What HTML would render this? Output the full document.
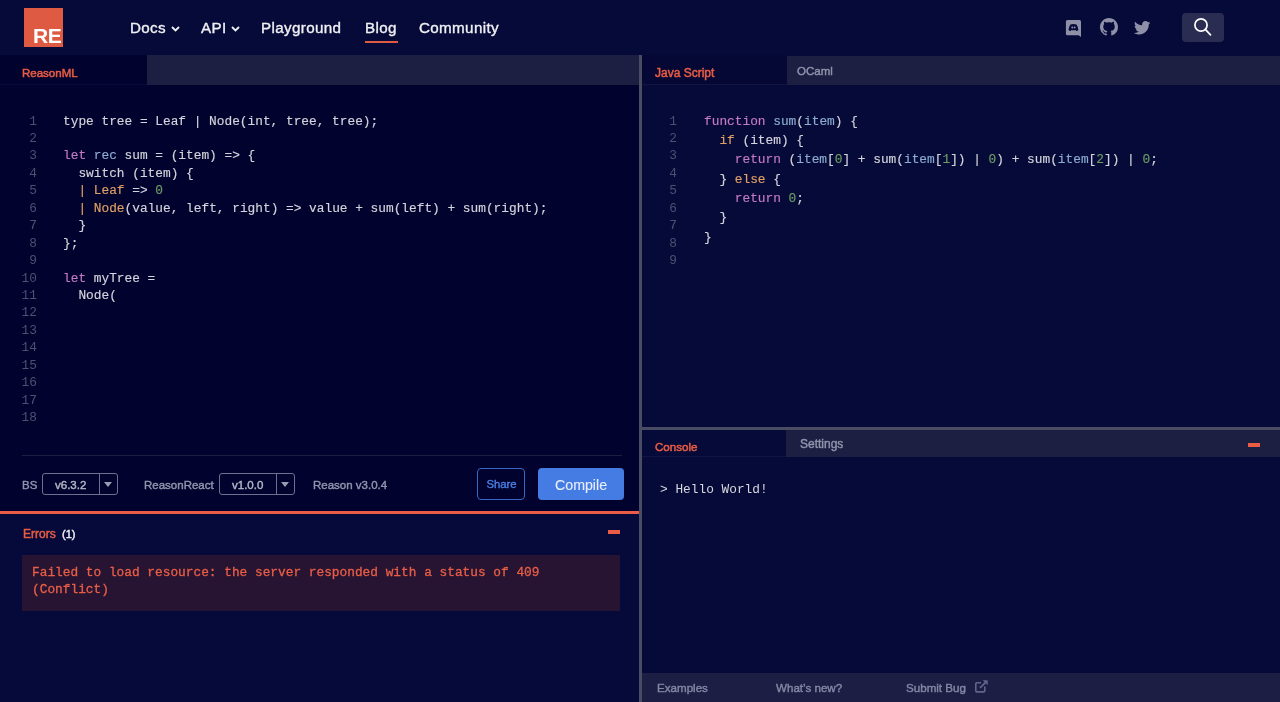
<!DOCTYPE html>
<html><head><meta charset="utf-8">
<style>
*{margin:0;padding:0;box-sizing:border-box}
html,body{width:1280px;height:702px;overflow:hidden;background:#02022e;font-family:"Liberation Sans",sans-serif}
.a{position:absolute}
.mono{font-family:"Liberation Mono",monospace}
#nav{left:0;top:0;width:1280px;height:55px;background:#060a38}
.nl{position:absolute;top:18.6px;-webkit-text-stroke-width:0.35px;color:#f0f0f4;font-size:15.2px;letter-spacing:.35px;line-height:18px;white-space:nowrap}
.chev{position:absolute;top:26px;width:9px;height:6px}
.tabbar{height:30px}
.lbl{position:absolute;white-space:nowrap;line-height:14px;-webkit-text-stroke-width:0.42px}
.ln{position:absolute;color:#4e5070;text-align:right;font-family:"Liberation Mono",monospace;font-size:12.82px;line-height:17.43px;white-space:pre}
.code{position:absolute;color:#d4d4dc;-webkit-text-stroke-width:0.15px;font-family:"Liberation Mono",monospace;font-size:12.82px;white-space:pre}
.k{color:#c47ac0}.b{color:#8cacd0}.o{color:#e0a065}.g{color:#6c9c64}
</style></head><body>
<div id="root" style="position:absolute;left:0;top:0;width:1280px;height:702px;overflow:hidden;will-change:transform">
<!-- NAV -->
<div id="nav" class="a">
  <div class="a" style="left:24px;top:8px;width:39px;height:39px;background:#df5a42"></div>
  <div class="a" style="left:33px;top:25px;color:#fff;font-weight:bold;font-size:21px;line-height:21px;letter-spacing:-0.5px">RE</div>
  <div class="nl" style="left:130px">Docs</div>
  <svg class="chev" style="left:171px" viewBox="0 0 9 6"><path d="M1 1 L4.5 4.5 L8 1" stroke="#f0f0f4" stroke-width="1.8" fill="none"/></svg>
  <div class="nl" style="left:201px">API</div>
  <svg class="chev" style="left:231px" viewBox="0 0 9 6"><path d="M1 1 L4.5 4.5 L8 1" stroke="#f0f0f4" stroke-width="1.8" fill="none"/></svg>
  <div class="nl" style="left:261px">Playground</div>
  <div class="nl" style="left:365px">Blog</div>
  <div class="a" style="left:365px;top:41px;width:33px;height:2px;background:#df5a42"></div>
  <div class="nl" style="left:419px">Community</div>
  <!-- icons -->
  <svg class="a" style="left:1065px;top:19px" width="18" height="19" viewBox="0 0 18 19">
    <path d="M2.4 1.1 H14.5 A1.5 1.5 0 0 1 16 2.6 V17.9 L13.6 16.3 H2.4 A1.5 1.5 0 0 1 0.9 14.8 V2.6 A1.5 1.5 0 0 1 2.4 1.1 Z" fill="#8e90a8"/>
    <path d="M5.4 5.4 Q8.45 4.5 11.5 5.4 Q13.4 8.3 13.4 11.1 Q12.4 12 11.2 12 L10.5 11 Q8.45 11.6 6.4 11 L5.7 12 Q4.5 12 3.5 11.1 Q3.5 8.3 5.4 5.4 Z" fill="#060a38"/>
    <circle cx="7.3" cy="8.45" r="0.95" fill="#8e90a8"/><circle cx="9.6" cy="8.45" r="0.95" fill="#8e90a8"/>
  </svg>
  <svg class="a" style="left:1099.6px;top:18px" width="18" height="18" viewBox="0 0 16 16">
    <path fill="#8e90a8" d="M8 0C3.58 0 0 3.58 0 8c0 3.54 2.29 6.53 5.47 7.59.4.07.55-.17.55-.38 0-.19-.01-.82-.01-1.49-2.01.37-2.53-.49-2.69-.94-.09-.23-.48-.94-.82-1.13-.28-.15-.68-.52-.01-.53.63-.01 1.08.58 1.23.82.72 1.21 1.87.87 2.33.66.07-.52.28-.87.51-1.07-1.78-.2-3.640-.89-3.64-3.95 0-.87.31-1.59.82-2.15-.08-.2-.36-1.02.08-2.12 0 0 .67-.21 2.2.82.64-.18 1.32-.27 2-.27.68 0 1.36.09 2 .27 1.53-1.04 2.2-.82 2.2-.82.44 1.1.16 1.92.08 2.12.51.56.82 1.270.82 2.15 0 3.07-1.87 3.75-3.65 3.95.29.25.54.73.54 1.48 0 1.07-.01 1.93-.01 2.2 0 .21.15.46.55.38A8.013 8.013 0 0016 8c0-4.42-3.58-8-8-8z"/>
  </svg>
  <svg class="a" style="left:1133.8px;top:20.8px" width="16.5" height="13.8" viewBox="0 0 24 20">
    <path fill="#8e90a8" d="M24 2.4c-.9.4-1.8.6-2.8.8 1-.6 1.8-1.6 2.2-2.7-1 .6-2 1-3.1 1.2C19.4.7 18.1.1 16.7.1c-2.7 0-4.9 2.2-4.9 4.9 0 .4 0 .8.1 1.1C7.7 5.9 4.1 4 1.7 1 1.2 1.7 1 2.6 1 3.5c0 1.7.9 3.2 2.2 4.1-.8 0-1.6-.2-2.2-.6v.1c0 2.4 1.7 4.4 3.9 4.8-.4.1-.8.2-1.3.2-.3 0-.6 0-.9-.1.6 2 2.4 3.4 4.6 3.4-1.7 1.3-3.8 2.1-6.1 2.1-.4 0-.8 0-1.2-.1 2.2 1.4 4.8 2.2 7.5 2.2 9.1 0 14-7.5 14-14v-.6c1-.7 1.8-1.6 2.5-2.6z"/>
  </svg>
  <div class="a" style="left:1182px;top:13px;width:42px;height:29px;border-radius:4px;background:#2a2c52"></div>
  <svg class="a" style="left:1190px;top:15px" width="26" height="25" viewBox="0 0 26 25">
    <circle cx="11" cy="10" r="6.1" stroke="#fff" stroke-width="1.7" fill="none"/>
    <path d="M15.3 14.3 L20.5 19.8" stroke="#fff" stroke-width="1.7" stroke-linecap="round"/>
  </svg>
</div>

<!-- LEFT PANE -->
<div class="a" style="left:0;top:55px;width:639px;height:30px;background:#1c1e42"></div>
<div class="a" style="left:0;top:55px;width:147px;height:30px;background:#02022e"></div>
<div class="a" style="left:0;top:84px;width:147px;height:1px;background:#0a0b38"></div>
<div class="lbl" style="left:22px;top:66px;color:#e85c44;font-size:11.5px;-webkit-text-stroke-width:0.5px">ReasonML</div>


<div class="ln" style="left:0;top:112.6px;width:37px">1
2
3
4
5
6
7
8
9
10
11
12
13
14
15
16
17
18</div>
<div class="code" style="left:63px;top:112.6px;line-height:17.43px">type tree = Leaf | Node(int, tree, tree);

<span class="k">let</span> <span class="b">rec</span> sum = (item) =&gt; {
  switch (item) {
  <span class="o">|</span> <span class="o">Leaf</span> =&gt; <span class="g">0</span>
  <span class="o">|</span> <span class="o">Node</span>(value, left, right) =&gt; value + sum(left) + sum(right);
  }
};

<span class="k">let</span> myTree =
  Node(</div>
<div class="a" style="left:22px;top:455px;width:600px;height:1px;background:#1c1e40"></div>
<!-- toolbar -->
<div class="lbl" style="left:22px;top:478px;color:#9294ac;font-size:11.5px">BS</div>
<div class="a" style="left:42px;top:473px;width:76px;height:22px;border:1px solid #6e7090;border-radius:3px"></div>
<div class="a" style="left:99px;top:474px;width:1px;height:20px;background:#6e7090"></div>
<svg class="a" style="left:104px;top:482px" width="8" height="5" viewBox="0 0 8 5"><path d="M0 0 H8 L4 5 Z" fill="#9a9cb0"/></svg>
<div class="lbl" style="left:55px;top:478px;color:#b4b6c6;font-size:11.5px">v6.3.2</div>
<div class="lbl" style="left:144px;top:478px;color:#9294ac;font-size:11.5px">ReasonReact</div>
<div class="a" style="left:219px;top:473px;width:76px;height:22px;border:1px solid #6e7090;border-radius:3px"></div>
<div class="a" style="left:276px;top:474px;width:1px;height:20px;background:#6e7090"></div>
<svg class="a" style="left:281px;top:482px" width="8" height="5" viewBox="0 0 8 5"><path d="M0 0 H8 L4 5 Z" fill="#9a9cb0"/></svg>
<div class="lbl" style="left:232px;top:478px;color:#b4b6c6;font-size:11.5px">v1.0.0</div>
<div class="lbl" style="left:313px;top:478px;color:#9294ac;font-size:11.5px">Reason v3.0.4</div>
<div class="a" style="left:477px;top:468px;width:48px;height:32px;border:1.5px solid #3766c4;border-radius:4px"></div>
<div class="lbl" style="left:486.5px;top:477px;color:#4a80e4;font-size:11.3px;-webkit-text-stroke-width:0.35px">Share</div>
<div class="a" style="left:538px;top:468px;width:86px;height:31.5px;background:#457ce4;border-radius:4px"></div>
<div class="lbl" style="left:555px;top:477px;color:#e8eefa;font-size:14.2px;line-height:16px;-webkit-text-stroke-width:0.1px">Compile</div>
<!-- errors -->
<div class="a" style="left:0;top:511px;width:639px;height:3px;background:#ea5c45"></div>
<div class="a" style="left:0;top:514px;width:639px;height:188px;background:#050a3a"></div>
<div class="lbl" style="left:23px;top:526.5px;color:#e85c44;font-size:12px;-webkit-text-stroke-width:0.5px">Errors</div>
<div class="lbl" style="left:62px;top:526.5px;color:#f0f0f4;font-size:11px">(1)</div>
<div class="a" style="left:608px;top:530px;width:12px;height:4px;background:#ea5c45"></div>
<div class="a" style="left:22px;top:555px;width:598px;height:56px;background:#261432"></div>
<div class="code" style="left:32px;top:563.5px;line-height:17px;color:#ea5e46;-webkit-text-stroke-width:0.3px">Failed to load resource: the server responded with a status of 409
(Conflict)</div>

<!-- DIVIDER -->
<div class="a" style="left:639px;top:55px;width:3px;height:647px;background:#4a4c64"></div>
<!-- RIGHT PANE -->
<div class="a" style="left:642px;top:55px;width:638px;height:618px;background:#060a38"></div>
<div class="a" style="left:787px;top:56px;width:493px;height:29px;background:#1c1e42"></div>
<div class="a" style="left:642px;top:55px;width:145px;height:29px;background:#050834"></div>
<div class="a" style="left:642px;top:84px;width:145px;height:1px;background:#10143f"></div>
<div class="lbl" style="left:655px;top:66px;color:#e85c44;font-size:12px;-webkit-text-stroke-width:0.5px">Java Script</div>
<div class="lbl" style="left:797px;top:64px;color:#9294ac;font-size:11.5px">OCaml</div>
<div class="ln" style="left:642px;top:112.6px;width:35px">1
2
3
4
5
6
7
8
9</div>
<div class="code" style="left:704px;top:111.6px;line-height:19.33px"><span class="k">function</span> <span class="b">sum</span>(<span class="b">item</span>) {
  <span class="o">if</span> (item) {
    <span class="k">return</span> (<span class="b">item</span>[<span class="g">0</span>] + sum(<span class="b">item</span>[<span class="g">1</span>]) | <span class="g">0</span>) + sum(<span class="b">item</span>[<span class="g">2</span>]) | <span class="g">0</span>;
  } <span class="o">else</span> {
    <span class="k">return</span> <span class="g">0</span>;
  }
}</div>
<div class="a" style="left:642px;top:427px;width:638px;height:3px;background:#4a4c64"></div>
<div class="a" style="left:786px;top:430px;width:494px;height:27px;background:#1c1e42"></div>
<div class="a" style="left:642px;top:456px;width:144px;height:1px;background:#10143f"></div>
<div class="lbl" style="left:655px;top:440px;color:#e85c44;font-size:11.6px;-webkit-text-stroke-width:0.5px">Console</div>
<div class="lbl" style="left:800px;top:437px;color:#9294ac;font-size:12px">Settings</div>
<div class="a" style="left:1248px;top:443px;width:12px;height:4px;background:#ea5c45"></div>
<div class="code" style="left:660px;top:481px;line-height:17px;font-size:12.82px;color:#d8d8e0;-webkit-text-stroke-width:0">&gt; Hello World!</div>
<div class="a" style="left:642px;top:673px;width:638px;height:29px;background:#1c1e44"></div>
<div class="lbl" style="left:657px;top:681px;color:#8486a4;font-size:11.6px">Examples</div>
<div class="lbl" style="left:776px;top:681px;color:#8486a4;font-size:11.6px">What’s new?</div>
<div class="lbl" style="left:906px;top:681px;color:#8486a4;font-size:11.6px">Submit Bug</div>
<svg class="a" style="left:974px;top:679px" width="15" height="15" viewBox="0 0 15 15"><path d="M7 3.8 H2.8 A1.8 1.8 0 0 0 1.8 4.8 V11.9 A1.8 1.8 0 0 0 2.8 12.9 H9.8 A1.8 1.8 0 0 0 10.8 11.9 V7.5" stroke="#62648a" stroke-width="1.6" fill="none" stroke-linejoin="round"/><path d="M8.6 1.2 H13.7 V6.3 Z" fill="#62648a"/><path d="M12.6 2.3 L6 8.9" stroke="#62648a" stroke-width="1.7"/></svg>

</div>
</body></html>
